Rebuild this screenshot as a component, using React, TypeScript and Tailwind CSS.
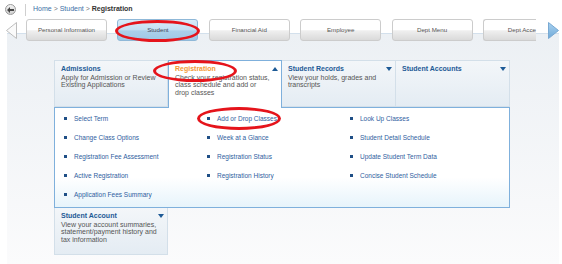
import React from "react";

const tabs = ["Personal Information", "Student", "Financial Aid", "Employee", "Dept Menu"];

const cards = [
  { title: "Admissions", desc: "Apply for Admission or Review Existing Applications", arrow: null },
  { title: "Registration", desc: "Check your registration status, class schedule and add or drop classes", arrow: "up" },
  { title: "Student Records", desc: "View your holds, grades and transcripts", arrow: "down" },
  { title: "Student Accounts", desc: "", arrow: "down" },
];

const linkColumns = [
  ["Select Term", "Change Class Options", "Registration Fee Assessment", "Active Registration", "Application Fees Summary"],
  ["Add or Drop Classes", "Week at a Glance", "Registration Status", "Registration History"],
  ["Look Up Classes", "Student Detail Schedule", "Update Student Term Data", "Concise Student Schedule"],
];

function Caret({ up }: { up?: boolean }) {
  return (
    <svg width="6" height="4" viewBox="0 0 6 4" className="absolute right-[3px] top-[6px]">
      <polygon points={up ? "0,4 3,0 6,4" : "0,0 6,0 3,4"} fill="#1d5a96" />
    </svg>
  );
}

function Card({
  title,
  desc,
  arrow,
  active,
  className,
}: {
  title: string;
  desc: string;
  arrow: string | null;
  active?: boolean;
  className: string;
}) {
  return (
    <div
      className={`relative w-[114px] pl-[6px] pr-[9.5px] pt-[3px] ${
        active
          ? "z-10 h-[48px] border border-b-0 border-[#7fb0dc] bg-white"
          : "h-[47px] border-[#d3dfe9] bg-[linear-gradient(to_bottom,#f3f6f9,#e4ecf3)]"
      } ${className}`}
    >
      <div className={`text-[7px] font-bold leading-[9px] ${active ? "text-[#f39a36]" : "text-[#1d5a96]"}`}>{title}</div>
      {desc && <p className="mt-px text-[7px] leading-[7.4px] text-[#555]">{desc}</p>}
      {arrow && <Caret up={arrow === "up"} />}
    </div>
  );
}

export default function App() {
  return (
    <div className="relative h-[264px] w-[562px] overflow-hidden bg-white font-['Liberation_Sans',Arial,sans-serif]">
      {/* breadcrumb */}
      <div className="flex h-[19px] items-center">
        <div className="ml-[5px] flex h-[11px] w-[11px] items-center justify-center rounded-full border border-[#9a9a9a] bg-[linear-gradient(to_bottom,#f4f4f4,#cfcfcf)]">
          <svg width="7" height="6" viewBox="0 0 7 6">
            <polygon points="0,3 3,0 3,2 7,2 7,4 3,4 3,6" fill="#444" />
          </svg>
        </div>
        <div className="ml-[9px] h-[12px] w-px bg-[#cfcfcf]" />
        <div className="ml-[7px] text-[7px] text-[#777]">
          <span className="text-[#3d6fa6]">Home</span> &gt; <span className="text-[#3d6fa6]">Student</span> &gt;{" "}
          <span className="font-bold text-[#333]">Registration</span>
        </div>
      </div>

      {/* tab strip */}
      <div className="relative z-10 flex h-[22px] items-center">
        <svg width="11" height="17" viewBox="0 0 11 17" className="ml-[6px]">
          <polygon points="10.5,0.5 0.5,8.5 10.5,16.5" fill="#fafafa" stroke="#bdbdbd" />
        </svg>
        <div className="ml-[9px] flex h-[22px] w-[510px] gap-[10.4px]">
          {tabs.map((t) => (
            <div
              key={t}
              className={`flex h-[22px] w-[81px] shrink-0 items-center justify-center rounded-[3px] border text-[6.2px] ${
                t === "Student"
                  ? "border-[#8fb8d8] bg-[linear-gradient(to_bottom,#d8ecf9_0%,#c4dff2_50%,#abd0ea_54%,#9fc8e6_100%)] text-[#445]"
                  : "border-[#cccccc] bg-[linear-gradient(to_bottom,#ffffff_0%,#ffffff_48%,#efefef_54%,#dadada_100%)] text-[#555]"
              }`}
            >
              {t}
            </div>
          ))}
          <div className="flex h-[22px] flex-1 items-center justify-end rounded-l-[3px] border border-r-0 border-[#cccccc] bg-[linear-gradient(to_bottom,#ffffff_0%,#ffffff_48%,#efefef_54%,#dadada_100%)] text-[6.2px] text-[#555]">
            Dept Acce
          </div>
        </div>
        <svg width="11" height="17" viewBox="0 0 11 17" className="ml-[12px]">
          <defs>
            <linearGradient id="ra" x1="0" y1="0" x2="0" y2="1">
              <stop offset="0" stopColor="#a9d2f0" />
              <stop offset="1" stopColor="#6fa9d8" />
            </linearGradient>
          </defs>
          <polygon points="0.5,0.5 10.5,8.5 0.5,16.5" fill="url(#ra)" stroke="#79a9d3" />
        </svg>
      </div>

      {/* content box */}
      <div className="-mt-[8px] ml-[7px] h-[231px] w-[552px] border-t border-[#d3e0ec] bg-[linear-gradient(to_bottom,#ecf0f4,#fbfbfc)] pl-[47px] pt-[26px]">
        <div className="flex items-start">
          {cards.map((c, i) => (
            <Card
              key={c.title}
              title={c.title}
              desc={c.desc}
              arrow={c.arrow}
              active={c.title === "Registration"}
              className={c.title === "Registration" ? "" : i === 0 ? "border" : "border border-l-0"}
            />
          ))}
        </div>

        <div className="-mt-px flex h-[101px] w-[456px] border border-[#7fb0dc] bg-[linear-gradient(to_bottom,#ffffff_0%,#ffffff_70%,#e7f4fb_100%)] pl-[9px] pt-px">
          {linkColumns.map((col, ci) => (
            <ul key={ci} className={ci < 2 ? "w-[143px]" : "flex-1"}>
              {col.map((l) => (
                <li key={l} className="flex h-[19px] items-center text-[6.5px] text-[#2f60a0]">
                  <span className="mr-[7px] h-[3px] w-[3px] bg-[#1f4f86]" />
                  {l}
                </li>
              ))}
            </ul>
          ))}
        </div>

        <Card
          title="Student Account"
          desc="View your account summaries, statement/payment history and tax information"
          arrow="down"
          className="border border-t-0"
        />
      </div>

      {/* red annotation ellipses */}
      <div className="absolute left-[115px] top-[20px] z-20 h-[22px] w-[85px] rounded-[50%] border-[3px] border-[#e5141b]" />
      <div className="absolute left-[153px] top-[60px] z-20 h-[22px] w-[84px] rounded-[50%] border-[3px] border-[#e5141b]" />
      <div className="absolute left-[197px] top-[107px] z-20 h-[23px] w-[84px] rounded-[50%] border-[3px] border-[#e5141b]" />
    </div>
  );
}
